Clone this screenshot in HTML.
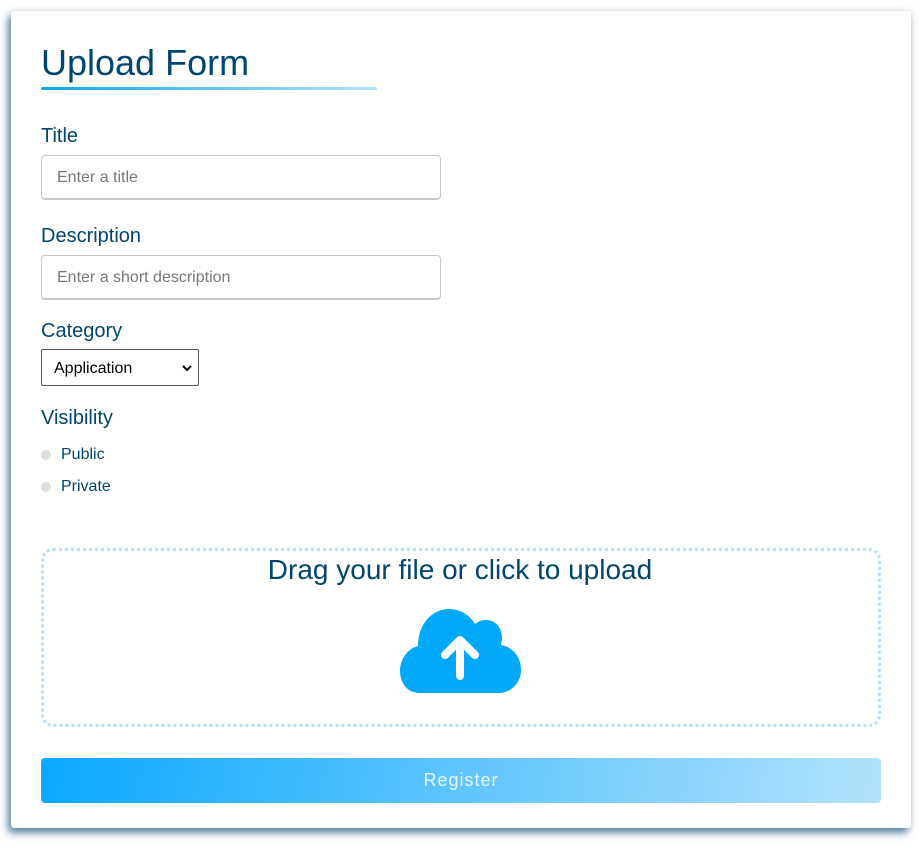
<!DOCTYPE html>
<html><head><style>
body{margin:0;width:922px;height:849px;background:#fff;font-family:"Liberation Sans",sans-serif;position:relative;overflow:hidden}
.card{position:absolute;left:11px;top:11px;width:900px;height:817px;background:#fff;border-radius:3px;box-shadow:-3px 5px 8px rgba(0,60,100,.6),0 0 8px rgba(0,60,100,.15)}
.a{position:absolute;color:#00466e}
h1{position:absolute;left:41px;top:41px;margin:0;font-weight:normal;font-size:36px;color:#00466e;line-height:43px}
.ul{position:absolute;left:41px;top:87px;width:336px;height:3px;border-radius:2px;background:linear-gradient(90deg,#0aa8f5,#b3e2fb)}
.lbl{position:absolute;left:41px;font-size:20px;color:#00466e}
.in{position:absolute;left:41px;width:398px;height:42px;border:1px solid #c8c8c8;border-bottom:2px solid #c8c8c8;border-radius:4px;box-sizing:content-box;font-size:16px;color:#777;line-height:44px;text-indent:15px}
.sel{position:absolute;left:41px;top:349px;width:156px;height:35px;border:1px solid #555;border-radius:2px;font-size:16px;line-height:37px;color:#000;text-indent:12px}
.r{position:absolute;left:41px;font-size:16px;color:#00466e}
.r i{display:inline-block;width:10px;height:10px;border-radius:50%;background:#ddd;margin-right:10px;vertical-align:-1px}
.dz{position:absolute;left:41px;top:548px;width:834px;height:173px;border:3px dotted #b3e0fa;border-radius:12px}
.btn{position:absolute;left:41px;top:758px;width:840px;height:45px;border-radius:4px;background:linear-gradient(100deg,#0aa8ff,#b3e2fb);color:#eaf6ff;font-size:18px;line-height:45px;text-align:center;letter-spacing:1px}
</style></head><body>
<div class="card"></div>
<h1>Upload Form</h1>
<div class="ul"></div>
<div class="lbl" style="top:125px">Title</div>
<div class="in" style="top:155px">Enter a title</div>
<div class="lbl" style="top:225px">Description</div>
<div class="in" style="top:255px">Enter a short description</div>
<div class="lbl" style="top:320px">Category</div>
<div class="sel">Application<svg style="position:absolute;right:6px;top:14px" width="10" height="8" viewBox="0 0 10 8"><path d="M1 2l4 4 4-4" stroke="#000" stroke-width="2" fill="none"/></svg></div>
<div class="lbl" style="top:407px">Visibility</div>
<div class="r" style="top:446px"><i></i>Public</div>
<div class="r" style="top:478px"><i></i>Private</div>
<div class="dz"></div>
<div class="a" style="left:40px;width:840px;text-align:center;top:554px;font-size:28px">Drag your file or click to upload</div>
<svg style="position:absolute;left:400px;top:608px" width="121" height="86" viewBox="0 0 121 86">
<path d="M20 85 C5 85 0 72 0 63 C0 50 9 40 18 38 C18 15 33 1 49 1 C62 1 71 9 75 16 C79 13 82 12 86 12 C96 12 102 20 102 30 C102 33 101 35 101 37 C112 39 121 48 121 62 C121 75 111 85 98 85 Z" fill="#03a9f9"/>
<path d="M60 68 V34 M45 47 L60 32 L75 47" stroke="#fff" stroke-width="8" stroke-linecap="round" stroke-linejoin="round" fill="none"/>
</svg>
<div class="btn">Register</div>
</body></html>
